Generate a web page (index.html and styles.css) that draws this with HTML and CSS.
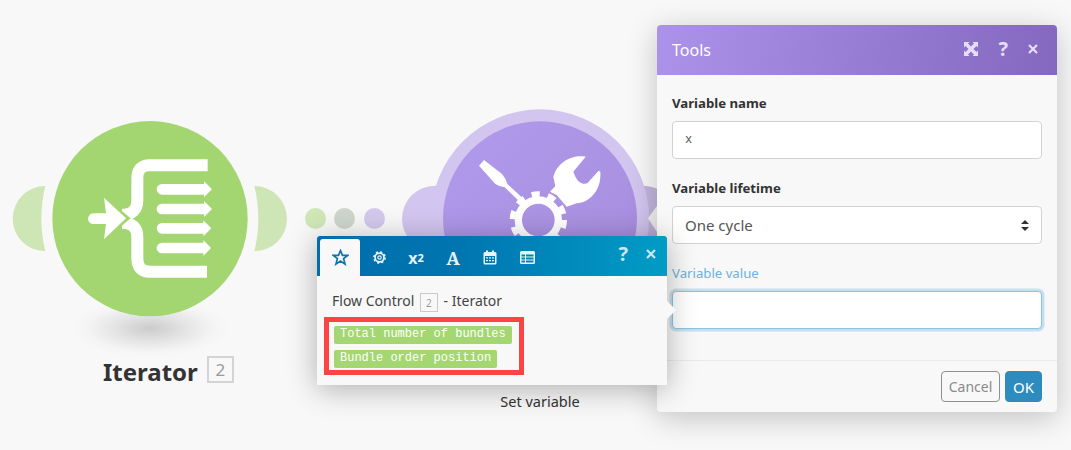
FILE: index.html
```html
<!DOCTYPE html>
<html lang="en">
<head>
<meta charset="utf-8">
<title>Tools</title>
<link rel="stylesheet" href="styles.css">
</head>
<body>
<main class="canvas">
  <svg class="node node-iterator" viewBox="0 0 960 840" aria-hidden="true">
    <defs>
      <radialGradient id="drop">
        <stop offset="0" stop-color="#000" stop-opacity=".18"/>
        <stop offset=".45" stop-color="#000" stop-opacity=".08"/>
        <stop offset=".8" stop-color="#000" stop-opacity=".015"/>
        <stop offset="1" stop-color="#000" stop-opacity="0"/>
      </radialGradient>
    </defs>
    <ellipse cx="450" cy="625" rx="240" ry="88" fill="url(#drop)"/>
    <path class="moon" d="M136 198 A98 98 0 0 0 136 394 Q112 296 136 198Z"/>
    <path class="moon" d="M763 198 A98 98 0 0 1 763 394 Q787 296 763 198Z"/>
    <circle class="disc" cx="450" cy="296" r="293"/>
    <g class="brace">
      <path d="M623 135.500H450Q412 135.500 412 175V240Q412 284 366 284"/>
      <path d="M621 455.500H450Q412 455.500 412 415V352Q412 308 366 308"/>
    </g>
    <path class="arrow-gap" d="M304 222L392 295L304 370Z"/>
    <path class="white" d="M280 280H318L312 233L378 295L312 358L318 312H280A16 16 0 0 1 280 280Z"/>
    <path class="white" d="M486 192H612V184L636 208L612 232V224H486A16 16 0 0 1 486 192Z"/>
    <path class="white" d="M486 251H612V243L636 267L612 291V283H486A16 16 0 0 1 486 251Z"/>
    <path class="white" d="M486 309H610V301L634 325L610 349V341H486A16 16 0 0 1 486 309Z"/>
    <path class="white" d="M486 368H610V360L633 384L610 408V400H486A16 16 0 0 1 486 368Z"/>
  </svg>

  <div class="node-title">
    <span class="title-text">Iterator</span>
    <span class="title-badge">2</span>
  </div>

  <div class="dot dot-green"></div>
  <div class="dot dot-grey"></div>
  <div class="dot dot-purple"></div>

  <svg class="node node-tools" viewBox="0 0 1110 540" aria-hidden="true">
    <defs>
      <linearGradient id="violet" x1="0" y1="0" x2="1" y2="1">
        <stop offset="0" stop-color="#b19aec"/>
        <stop offset="1" stop-color="#a68cdc"/>
      </linearGradient>
    </defs>
    <circle class="halo" cx="405" cy="356" r="99"/>
    <circle class="halo-right" cx="1030" cy="356" r="99"/>
    <circle class="halo" cx="720" cy="355" r="327"/>
    <circle cx="720" cy="355" r="291" fill="url(#violet)"/>
    <path class="notch" d="M1071 318L1044 355L1071 396Z"/>
    <path class="white" d="M537 197L552 180L606 222Q618 236 622 252L670 296L660 306L614 262Q598 260 586 252Z"/>
    <path class="white" d="M857 170C815 163 770 188 760 232L766 258L750 275L770 285L800 320L830 310C870 307 905 270 901 215L896 212L862 250C845 255 830 245 820 215Z"/>
    <circle class="gear-ring" cx="715" cy="360" r="60"/>
    <circle class="gear-teeth" cx="715" cy="360" r="76"/>
  </svg>

  <div class="node-caption">Set variable</div>

  <section class="modal">
    <header class="modal-head">
      <h2 class="modal-title">Tools</h2>
      <div class="modal-actions">
        <svg class="icon-expand" viewBox="0 0 14 14" aria-hidden="true">
          <path d="M0 0H5.500L4 1.500 7 4.500 10 1.500 8.500 0H14V5.500L12.500 4 9.500 7 12.500 10 14 8.500V14H8.500L10 12.500 7 9.500 4 12.500 5.500 14H0V8.500L1.500 10 4.500 7 1.500 4 0 5.500Z"/>
        </svg>
        <span class="glyph-help">?</span>
        <svg class="icon-close" viewBox="0 0 10 10" aria-hidden="true"><path d="M1 1L9 9M9 1L1 9"/></svg>
      </div>
    </header>
    <div class="modal-body">
      <div class="field">
        <label class="field-label" for="vname">Variable name</label>
        <input class="control control-mono" id="vname" type="text" value="x">
      </div>
      <div class="field">
        <label class="field-label" for="vlife">Variable lifetime</label>
        <div class="select-wrap">
          <select class="control control-select" id="vlife"><option>One cycle</option></select>
          <svg class="select-arrows" viewBox="0 0 8 11" aria-hidden="true"><path d="M4 0L8 4H0ZM0 7H8L4 11Z"/></svg>
        </div>
      </div>
      <div class="field">
        <label class="field-label field-label-active" for="vvalue">Variable value</label>
        <input class="control control-focus" id="vvalue" type="text">
      </div>
    </div>
    <footer class="modal-foot">
      <button class="btn btn-cancel" type="button">Cancel</button>
      <button class="btn btn-ok" type="button">OK</button>
    </footer>
  </section>

  <section class="popover">
    <nav class="tabs">
      <div class="tab tab-active">
        <svg class="tab-star" viewBox="0 0 16 16" aria-hidden="true"><path d="M8 1.500L9.900 6H14.800L10.900 9.100 12.300 14.200 8 11.400 3.700 14.200 5.100 9.100 1.200 6H6.100Z"/></svg>
      </div>
      <div class="tab">
        <svg class="tab-gear" viewBox="0 0 16 16" aria-hidden="true">
          <circle class="tab-gear-ring" cx="8" cy="8" r="4.700"/>
          <circle class="tab-gear-teeth" cx="8" cy="8" r="5.900"/>
          <circle class="tab-gear-hole" cx="8" cy="8" r="1.800"/>
        </svg>
      </div>
      <div class="tab tab-text tab-math">x<sup class="tab-sup">2</sup></div>
      <div class="tab tab-text tab-letter">A</div>
      <div class="tab tab-narrow">
        <svg class="tab-svg" viewBox="0 0 14 15" aria-hidden="true">
          <path d="M2 2H3V0.500H5V2H9V0.500H11V2H12A1.500 1.500 0 0 1 13.500 3.500V13A1.500 1.500 0 0 1 12 14.500H2A1.500 1.500 0 0 1 .5 13V3.500A1.500 1.500 0 0 1 2 2ZM2 6V13H12V6ZM3 7.200H5V8.500H3ZM6 7.200H8V8.500H6ZM9 7.200H11V8.500H9ZM3 10H5V11.300H3ZM6 10H8V11.300H6ZM9 10H11V11.300H9Z" fill-rule="evenodd"/>
        </svg>
      </div>
      <div class="tab">
        <svg class="tab-table" viewBox="0 0 15 13" aria-hidden="true">
          <path d="M1.500 0H13.500A1.500 1.500 0 0 1 15 1.500V11.500A1.500 1.500 0 0 1 13.500 13H1.500A1.500 1.500 0 0 1 0 11.500V1.500A1.500 1.500 0 0 1 1.500 0ZM1.500 3.500V5.500H5V3.500ZM6 3.500V5.500H13.500V3.500ZM1.500 6.500V8.500H5V6.500ZM6 6.500V8.500H13.500V6.500ZM1.500 9.500V11.500H5V9.500ZM6 9.500V11.500H13.500V9.500Z" fill-rule="evenodd"/>
        </svg>
      </div>
      <div class="tab-tools">
        <span class="glyph-help glyph-help-pop">?</span>
        <svg class="icon-close icon-close-pop" viewBox="0 0 10 10" aria-hidden="true"><path d="M1 1L9 9M9 1L1 9"/></svg>
      </div>
    </nav>
    <div class="pop-body">
      <div class="pop-heading">Flow Control <span class="pop-badge">2</span> - Iterator</div>
      <div class="pill-box">
        <span class="pill">Total number of bundles</span>
        <span class="pill">Bundle order position</span>
      </div>
    </div>
    <span class="pop-arrow"></span>
  </section>
</main>
</body>
</html>
```
FILE: styles.css
```css
* { box-sizing: border-box; }

html, body {
  margin: 0;
  height: 100%;
  overflow: hidden;
}

body {
  background: #f8f8f8;
  font-family: "Noto Sans", "Open Sans", sans-serif;
  color: #333;
}

.canvas {
  position: relative;
  width: 1071px;
  height: 450px;
  overflow: hidden;
}

/* diagram nodes */
.node { position: absolute; }

.node-iterator {
  left: 0;
  top: 120px;
  width: 320px;
  height: 280px;
}

.moon { fill: #cee6b5; }
.disc { fill: #a3d570; }
.white { fill: #fff; }
.arrow-gap { fill: #a3d570; }

.brace path {
  fill: none;
  stroke: #fff;
  stroke-width: 36;
}

.node-title {
  position: absolute;
  left: 103px;
  top: 354px;
  display: flex;
  align-items: center;
  gap: 9px;
}

.title-text {
  font-size: 24px;
  font-weight: 700;
  line-height: 36px;
  color: #333;
}

.title-badge {
  width: 27px;
  height: 27px;
  margin-top: -6px;
  border: 2px solid #d4d4d4;
  color: #9a9a9a;
  font-size: 17px;
  line-height: 23px;
  text-align: center;
}

.dot {
  position: absolute;
  top: 208px;
  width: 21px;
  height: 21px;
  border-radius: 50%;
}

.dot-green { left: 305px; background: #cfe6b7; }
.dot-grey { left: 334px; background: #ced6cc; }
.dot-purple { left: 364px; background: #d3c9ec; }

.node-tools {
  left: 300px;
  top: 100px;
  width: 370px;
  height: 180px;
}

.halo { fill: #d2c5ef; }
.halo-right { fill: #c3b5de; }
.notch { fill: #f4f4f4; }

.gear-ring {
  fill: none;
  stroke: #fff;
  stroke-width: 22;
}

.gear-teeth {
  fill: none;
  stroke: #fff;
  stroke-width: 20;
  stroke-dasharray: 24 24;
}

.node-caption {
  position: absolute;
  left: 440px;
  top: 391px;
  width: 200px;
  font-size: 14.500px;
  line-height: 20px;
  text-align: center;
  color: #333;
}

/* settings dialog */
.modal {
  position: absolute;
  left: 657px;
  top: 25px;
  width: 400px;
  height: 387px;
  background: #f8f8f8;
  border-radius: 4px;
  box-shadow: 0 6px 30px rgba(0, 0, 0, .22);
}

.modal-head {
  height: 50px;
  padding: 0 19px 0 15px;
  display: flex;
  align-items: center;
  justify-content: space-between;
  background: linear-gradient(100deg, #ac92ea 0%, #8468bf 100%);
  border-radius: 4px 4px 0 0;
}

.modal-title {
  margin: 0;
  font-size: 16px;
  font-weight: 400;
  color: #fff;
}

.modal-actions {
  display: flex;
  align-items: center;
  gap: 20px;
  margin-top: -2px;
}

.icon-expand {
  width: 14px;
  height: 14px;
  fill: #e6ddf7;
}

.glyph-help {
  font-size: 20px;
  font-weight: 700;
  line-height: 20px;
  color: #e6ddf7;
}

.icon-close {
  width: 10px;
  height: 10px;
}

.icon-close path {
  fill: none;
  stroke: #e6ddf7;
  stroke-width: 2.200;
}

.modal-body {
  height: 286px;
  padding: 18px 15px 0;
  border-bottom: 1px solid #ebebeb;
  display: flex;
  flex-direction: column;
  gap: 19px;
}

.field {
  display: flex;
  flex-direction: column;
  gap: 7px;
}

.field-label {
  font-size: 13.200px;
  font-weight: 700;
  line-height: 21px;
  color: #333;
}

.field-label-active {
  font-weight: 400;
  color: #6cb1e1;
}

.control {
  display: block;
  width: 100%;
  height: 38px;
  padding: 0 12px;
  background: #fff;
  border: 1px solid #d2d2d2;
  border-radius: 4px;
  outline: none;
  font-family: "Noto Sans", "Open Sans", sans-serif;
  font-size: 15px;
  color: #555;
}

.control-mono {
  font-family: "Liberation Mono", monospace;
  font-size: 12px;
}

.control-select {
  appearance: none;
  -webkit-appearance: none;
}

.control-focus {
  border-color: #8cc3e2;
  box-shadow: 0 0 0 2.500px #c4dfee;
}

.select-wrap { position: relative; }

.select-arrows {
  position: absolute;
  right: 13px;
  top: 14px;
  width: 8px;
  height: 11px;
  fill: #333;
}

.modal-foot {
  padding: 10px 15px;
  display: flex;
  justify-content: flex-end;
  gap: 5px;
}

.btn {
  height: 31px;
  padding: 0;
  border-radius: 4px;
  font-family: "Noto Sans", "Open Sans", sans-serif;
}

.btn-cancel {
  width: 59px;
  font-size: 14px;
  background: transparent;
  border: 1px solid #8f8f8f;
  color: #8a8a8a;
}

.btn-ok {
  width: 37px;
  font-size: 15px;
  background: #2e8bbe;
  border: 1px solid #2e8bbe;
  color: #fff;
}

/* mapping popover */
.popover {
  position: absolute;
  left: 317px;
  top: 236px;
  width: 350px;
  height: 149px;
  background: #f8f8f8;
  box-shadow: 0 4px 28px rgba(0, 0, 0, .3);
}

.tabs {
  height: 40px;
  padding: 3px 0 0 3px;
  display: flex;
  background: linear-gradient(90deg, #006eac 0%, #0075b0 40%, #009cc6 100%);
  border-radius: 3px 3px 0 0;
}

.tab {
  width: 38px;
  height: 37px;
  display: flex;
  align-items: center;
  justify-content: center;
}

.tab-active {
  width: 40px;
  background: #f8f8f8;
  border-radius: 3px 3px 0 0;
}

.tab-narrow { width: 36px; }

.tab-star {
  width: 17px;
  height: 17px;
  fill: none;
  stroke: #0c73b0;
  stroke-width: 1.600;
}

.tab-gear { width: 15px; height: 15px; }

.tab-gear-ring {
  fill: none;
  stroke: #e8f3f9;
  stroke-width: 1.800;
}

.tab-gear-teeth {
  fill: none;
  stroke: #e8f3f9;
  stroke-width: 1.800;
  stroke-dasharray: 2.300 2.330;
}

.tab-gear-hole {
  fill: none;
  stroke: #e8f3f9;
  stroke-width: 1.300;
}

.tab-text {
  font-weight: 700;
  color: #e8f3f9;
}

.tab-math {
  font-family: "Noto Sans", sans-serif;
  font-size: 16px;
  width: 36px;
}

.tab-sup {
  font-size: 11px;
  line-height: 0;
  vertical-align: 6px;
}

.tab-letter {
  font-family: "Noto Serif", "DejaVu Serif", serif;
  font-size: 18px;
  width: 38px;
}

.tab-svg { width: 14px; height: 15px; fill: #e8f3f9; }
.tab-table { width: 15px; height: 13px; fill: #e8f3f9; }

.tab-tools {
  margin-left: auto;
  display: flex;
  align-items: center;
  gap: 18px;
  padding: 0 11px 7px 0;
}

.glyph-help-pop { color: #c9e7f3; }
.icon-close-pop path { stroke: #c9e7f3; }

.pop-body { padding: 15px 7px 0; }

.pop-heading {
  padding-left: 8px;
  font-size: 14px;
  line-height: 20px;
  color: #444;
}

.pop-badge {
  display: inline-block;
  width: 18px;
  height: 19px;
  margin: 0 2px;
  border: 1px solid #c9c9c9;
  color: #9a9a9a;
  font-size: 10px;
  line-height: 18px;
  text-align: center;
  vertical-align: -1px;
}

.pill-box {
  width: 200px;
  height: 58px;
  margin-top: 5px;
  padding: 4px 5px 0;
  border: 5px solid #fc4444;
  display: flex;
  flex-direction: column;
  align-items: flex-start;
  gap: 6px;
}

.pill {
  flex: none;
  height: 18px;
  padding: 0 6px;
  background: #a4d672;
  border-radius: 2px;
  font-family: "Liberation Mono", monospace;
  font-size: 12px;
  line-height: 17px;
  color: #fff;
  white-space: nowrap;
}

.pop-arrow {
  position: absolute;
  left: 350px;
  top: 65px;
  border-left: 9px solid #f8f8f8;
  border-top: 9px solid transparent;
  border-bottom: 9px solid transparent;
}
```
